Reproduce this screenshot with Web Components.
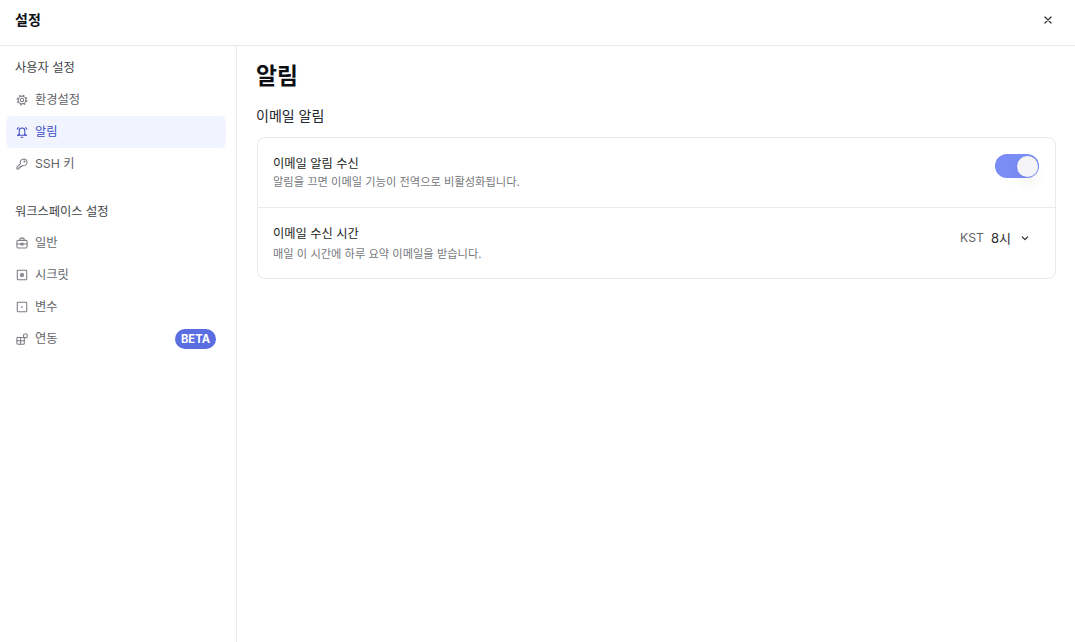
<!DOCTYPE html>
<html lang="ko">
<head>
<meta charset="utf-8">
<title>설정</title>
<style>
  html, body { margin: 0; height: 100%; background: #fff; }
  body { font-family: Inter, "Noto Sans CJK KR", sans-serif; color: #16181d; }
</style>
</head>
<body>
<settings-dialog>
  <settings-nav slot="nav">
    <nav-label>사용자 설정</nav-label>
    <nav-item icon="gear">환경설정</nav-item>
    <nav-item icon="bell" active>알림</nav-item>
    <nav-item icon="key">SSH 키</nav-item>
    <nav-label second>워크스페이스 설정</nav-label>
    <nav-item icon="case">일반</nav-item>
    <nav-item icon="secret">시크릿</nav-item>
    <nav-item icon="variable">변수</nav-item>
    <nav-item icon="blocks" badge="BETA">연동</nav-item>
  </settings-nav>
  <h-page title="알림" section="이메일 알림">
    <setting-row name="이메일 알림 수신" desc="알림을 끄면 이메일 기능이 전역으로 비활성화됩니다.">
      <toggle-switch></toggle-switch>
    </setting-row>
    <setting-row name="이메일 수신 시간" desc="매일 이 시간에 하루 요약 이메일을 받습니다." divided>
      <time-select></time-select>
    </setting-row>
  </h-page>
</settings-dialog>

<script>
const FONT = 'Inter, "Noto Sans CJK KR", sans-serif'

// 14px icons on a 16 grid, drawn in currentColor
const ICONS = {
  gear: '<circle cx="8" cy="8" r="4.3"/><circle cx="8" cy="8" r="5.4" stroke-width="1.5" stroke-dasharray="2.12 2.12" stroke-linecap="butt"/><circle cx="8" cy="8" r="1.9"/>',
  bell: '<path d="M4.8 11.2V6.6a3.2 3.2 0 0 1 6.4 0v4.6"/><path d="M3 11.6c.9-.2 1.5-.4 1.8-.9M13 11.6c-.9-.2-1.5-.4-1.8-.9"/><path d="M3 11.6h10"/><path d="M2.4 4.8L3.8 3M13.6 4.8L12.2 3"/><path d="M7 14h2"/>',
  key: '<path d="M9.9 2.2a3.9 3.9 0 1 1-1.5 7.5L7.2 10.9H5.8v1.4H4.4v1.5H2.2v-2.2l4.1-4.1a3.9 3.9 0 0 1 3.6-5.3z"/><circle cx="10.8" cy="5.2" r=".6"/>',
  case: '<rect x="2.2" y="5" width="11.6" height="8.6" rx="1.4"/><path d="M5.6 5V3.4a1 1 0 0 1 1-1h2.8a1 1 0 0 1 1 1V5"/><path d="M2.2 9.2h11.6"/><path d="M6.8 8.4h2.4v1.8H6.8z"/>',
  secret: '<rect x="2.6" y="2.6" width="10.8" height="10.8" rx=".8"/><circle cx="8" cy="8" r="2.5" fill="currentColor" fill-opacity=".85" stroke="none"/>',
  variable: '<rect x="2.6" y="2.6" width="10.8" height="10.8" rx=".8"/><circle cx="8" cy="8" r="1" fill="currentColor" stroke="none"/>',
  blocks: '<rect x="2.2" y="6.2" width="8.4" height="7.8" rx="1"/><path d="M2.2 10h8.4M6.4 6.2V14"/><rect x="9.8" y="2.2" width="4.2" height="4.2" rx="1.2"/>',
}

class SettingsDialog extends HTMLElement {
  connectedCallback() {
    const shadow = this.attachShadow({ mode: 'open' })
    shadow.innerHTML = `
      <style>
        :host { display: flex; flex-direction: column; height: 100vh; overflow: hidden; font-family: ${FONT}; }
        header {
          flex: none; height: 40px; box-sizing: content-box; border-bottom: 1px solid #e9eaec;
          display: flex; align-items: center; justify-content: space-between;
          padding: 0 19px 5px 15px;
        }
        h1 { margin: 0; font-size: 14px; font-weight: 700; line-height: 20px; color: #0d0f12; }
        .close { width: 16px; height: 16px; display: block; color: #33363c; }
        .body { flex: 1; display: flex; min-height: 0; }
        .nav { flex: none; width: 236px; border-right: 1px solid #e9eaec; }
        .main { flex: 1; min-width: 0; }
      </style>
      <header>
        <h1>설정</h1>
        <svg class="close" viewBox="0 0 16 16" fill="none" stroke="currentColor" stroke-width="1.3" stroke-linecap="round"><path d="M5 5l6 6M11 5l-6 6"/></svg>
      </header>
      <div class="body">
        <div class="nav"><slot name="nav"></slot></div>
        <div class="main"><slot></slot></div>
      </div>
    `
  }
}

class SettingsNav extends HTMLElement {
  connectedCallback() {
    const shadow = this.attachShadow({ mode: 'open' })
    shadow.innerHTML = `
      <style>
        :host { display: flex; flex-direction: column; padding: 11px 10px 0 6px; }
      </style>
      <slot></slot>
    `
  }
}

class NavLabel extends HTMLElement {
  connectedCallback() {
    const shadow = this.attachShadow({ mode: 'open' })
    shadow.innerHTML = `
      <style>
        :host {
          display: block; height: 22px; line-height: 22px; padding-left: 9px;
          font-size: 12.25px; font-weight: 400; color: #444548; margin-bottom: 5px;
        }
        :host([second]) { margin-top: 21px; margin-bottom: 4px; }
      </style>
      <slot></slot>
    `
  }
}

class NavItem extends HTMLElement {
  connectedCallback() {
    const shadow = this.attachShadow({ mode: 'open' })
    const icon = ICONS[this.getAttribute('icon')] || ''
    const badge = this.getAttribute('badge')
    shadow.innerHTML = `
      <style>
        :host {
          display: flex; align-items: center; gap: 6px; height: 32px; padding: 0 10px 0 9px;
          border-radius: 6px; font-size: 12.25px; line-height: 16px; color: #636468;
        }
        :host([active]) { background: #f1f3fe; color: #3d4fc4; }
        svg { flex: none; width: 14px; height: 14px; color: #7c7e84; }
        :host([active]) svg { color: #3d4fc4; }
        .text { flex: 1; }
        .badge {
          display: flex; align-items: center; height: 20px; padding: 0 6px; border-radius: 10px;
          background: #5b6ee1; color: #fff; font-size: 11.2px; font-weight: 700;
        }
      </style>
      <svg viewBox="0 0 16 16" fill="none" stroke="currentColor" stroke-width="1.2" stroke-linecap="round" stroke-linejoin="round">${icon}</svg>
      <span class="text"><slot></slot></span>
      ${badge ? `<span class="badge">${badge}</span>` : ''}
    `
  }
}

class HPage extends HTMLElement {
  connectedCallback() {
    const shadow = this.attachShadow({ mode: 'open' })
    shadow.innerHTML = `
      <style>
        :host { display: block; padding: 13px 19px 0 20px; }
        h2 { margin: 0 0 0 -1px; font-size: 22.75px; line-height: 34px; font-weight: 700; color: #0d0f12; }
        h3 { margin: 12px 0 11px -1px; font-size: 14px; line-height: 21px; font-weight: 400; color: #22252a; }
        .card { border: 1px solid #e9eaec; border-radius: 8px; }
      </style>
      <h2>${this.getAttribute('title')}</h2>
      <h3>${this.getAttribute('section')}</h3>
      <div class="card"><slot></slot></div>
    `
  }
}

class SettingRow extends HTMLElement {
  connectedCallback() {
    const shadow = this.attachShadow({ mode: 'open' })
    shadow.innerHTML = `
      <style>
        :host {
          display: flex; align-items: flex-start; justify-content: space-between;
          height: 69px; box-sizing: border-box; padding: 17px 16px 0 15px;
        }
        :host([divided]) { border-top: 1px solid #e9eaec; height: 71px; padding-top: 17px; }
        .name { font-size: 12.25px; line-height: 18px; font-weight: 400; color: #1c1e22; }
        .desc { font-size: 11.25px; line-height: 18px; color: #77787c; }
        :host([divided]) .desc { margin-top: 2px; }
      </style>
      <div>
        <div class="name">${this.getAttribute('name')}</div>
        <div class="desc">${this.getAttribute('desc')}</div>
      </div>
      <slot></slot>
    `
  }
}

class ToggleSwitch extends HTMLElement {
  connectedCallback() {
    const shadow = this.attachShadow({ mode: 'open' })
    shadow.innerHTML = `
      <style>
        :host {
          display: flex; justify-content: flex-end; align-items: center;
          width: 44px; height: 24px; box-sizing: border-box; padding: 0 1.5px; margin-top: -1px;
          border-radius: 12px; background: #7a8cf5;
        }
        i { display: block; width: 21px; height: 21px; border-radius: 50%; background: #f5f5f7; box-shadow: 0 8px 14px rgba(0,0,0,.05); }
      </style>
      <i></i>
    `
  }
}

class TimeSelect extends HTMLElement {
  connectedCallback() {
    const shadow = this.attachShadow({ mode: 'open' })
    shadow.innerHTML = `
      <style>
        :host { display: flex; align-items: center; height: 26px; font-size: 12.25px; line-height: 16px; padding-right: 7px; }
        .zone { color: #636468; margin-right: 7px; }
        .value { color: #2a2b2e; margin-right: 7px; font-size: 13px; }
        svg { width: 14px; height: 14px; color: #33363c; }
      </style>
      <span class="zone">KST</span>
      <span class="value">8시</span>
      <svg viewBox="0 0 16 16" fill="none" stroke="currentColor" stroke-width="1.4" stroke-linecap="round" stroke-linejoin="round"><path d="M5 6.8L8 9.8l3-3"/></svg>
    `
  }
}

customElements.define('settings-dialog', SettingsDialog)
customElements.define('settings-nav', SettingsNav)
customElements.define('nav-label', NavLabel)
customElements.define('nav-item', NavItem)
customElements.define('h-page', HPage)
customElements.define('setting-row', SettingRow)
customElements.define('toggle-switch', ToggleSwitch)
customElements.define('time-select', TimeSelect)
</script>
</body>
</html>
